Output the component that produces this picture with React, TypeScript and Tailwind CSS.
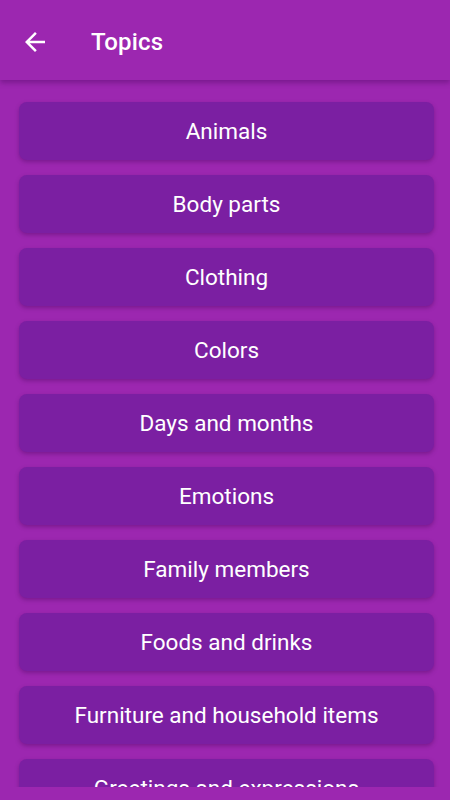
const topics = [
  "Animals",
  "Body parts",
  "Clothing",
  "Colors",
  "Days and months",
  "Emotions",
  "Family members",
  "Foods and drinks",
  "Furniture and household items",
  "Greetings and expressions",
  "Jobs",
  "Numbers",
];

export default function App() {
  return (
    <div className="h-screen flex flex-col bg-[#9c27b0] font-['Roboto',sans-serif] text-white">
      <header className="h-[80px] shrink-0 flex items-center pt-[3px] bg-[#9c27b0] shadow-[0_3px_5px_rgba(60,0,80,0.35)] z-10">
        <button className="w-[30px] h-[30px] ml-[20px] flex items-center justify-center">
          <svg viewBox="0 0 24 24" className="w-[30px] h-[30px]" fill="white">
            <path d="M20 11H7.83l5.59-5.59L12 4l-8 8 8 8 1.41-1.41L7.83 13H20v-2z" />
          </svg>
        </button>
        <h1 className="ml-[41px] text-[24px] font-medium tracking-[0.2px]">Topics</h1>
      </header>

      <main className="flex-1 overflow-hidden pt-[22px] pl-[19px] pr-[16px]">
        <div className="flex flex-col gap-[15px]">
          {topics.map((t) => (
            <div
              key={t}
              className="h-[58px] shrink-0 rounded-[8px] bg-[#7b1fa2] shadow-[0_2px_4px_rgba(60,0,80,0.35)] flex items-center justify-center text-[22.5px] pt-[1px]"
            >
              {t}
            </div>
          ))}
        </div>
      </main>
      <div className="h-[13px] shrink-0 bg-[#9c27b0]" />
    </div>
  );
}
